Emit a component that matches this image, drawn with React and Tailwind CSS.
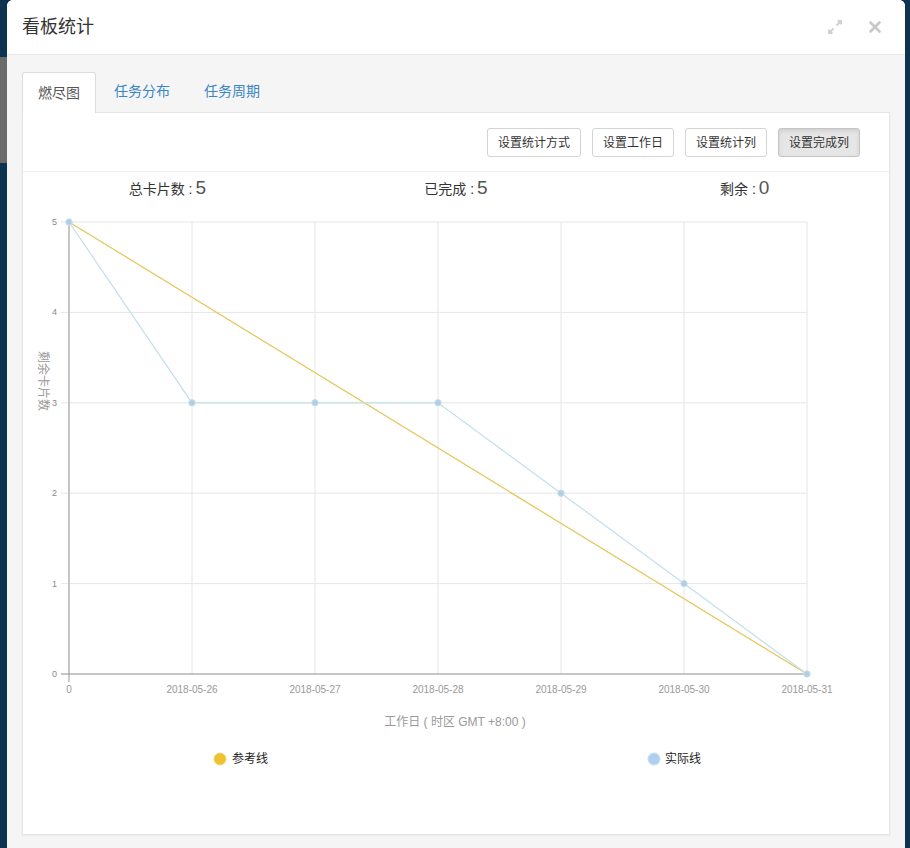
const font = { fontFamily: '"Liberation Sans", "Noto Sans CJK SC", sans-serif' };

const xs = [68, 191, 314, 437, 560, 683, 806];
const dates = ["0", "2018-05-26", "2018-05-27", "2018-05-28", "2018-05-29", "2018-05-30", "2018-05-31"];
const yOf = (v) => 675 - v * 90.4;
const actual = [5, 3, 3, 3, 2, 1, 0];

// chart svg is placed at page x=22, y=206
const OX = 22;
const OY = 206;

const BurnChart = () => {
    const pts = actual.map((v, i) => [xs[i] - OX, yOf(v) - OY]);
    return (
        <svg width="868" height="628" viewBox="0 0 868 628" className="block">
            {xs.map((x) => (
                <line key={"vx" + x} x1={x - OX} x2={x - OX} y1={223 - OY} y2={675 - OY} stroke="#e6e6e6" />
            ))}
            {[0, 1, 2, 3, 4, 5].map((v) => (
                <line key={"hy" + v} x1={60 - OX} x2={806 - OX} y1={yOf(v) - OY} y2={yOf(v) - OY} stroke="#e6e6e6" />
            ))}
            {[0, 1, 2, 3, 4, 5].map((v) => (
                <text key={"ty" + v} x={56 - OX} y={yOf(v) - OY + 3} fontSize="9" fill="#888" textAnchor="end" style={font}>
                    {v}
                </text>
            ))}
            <line x1={68 - OX} x2={68 - OX} y1={223 - OY} y2={683 - OY} stroke="#999" />
            <line x1={60 - OX} x2={806 - OX} y1={675 - OY} y2={675 - OY} stroke="#999" />
            {xs.map((x, i) => (
                <text key={"tx" + i} x={x - OX} y={694 - OY} fontSize="10" fill="#999" textAnchor="middle" style={font}>
                    {dates[i]}
                </text>
            ))}
            <line x1={68 - OX} y1={223 - OY} x2={806 - OX} y2={675 - OY} stroke="#e6c85e" strokeWidth="1.3" />
            <polyline points={pts.map((p) => p.join(",")).join(" ")} fill="none" stroke="#c2dfea" strokeWidth="1.2" />
            {pts.map((p, i) => (
                <circle key={"c" + i} cx={p[0]} cy={p[1]} r="3.2" fill="#b0cfe4" stroke="#cadfec" strokeWidth="1" />
            ))}
            <text x={454 - OX} y={727 - OY} fontSize="12" fill="#999" textAnchor="middle" style={font}>
                工作日 ( 时区 GMT +8:00 )
            </text>
            <text
                x={0}
                y={0}
                fontSize="12"
                fill="#999"
                textAnchor="middle"
                transform={`translate(${38 - OX} ${382 - OY}) rotate(90)`}
                style={font}
            >
                剩余卡片数
            </text>
            <circle cx={219 - OX} cy={760 - OY} r="6" fill="#efc12f" stroke="#f3d778" strokeWidth="1" />
            <text x={231 - OX} y={764 - OY} fontSize="12" fill="#222" style={font}>
                参考线
            </text>
            <circle cx={653 - OX} cy={760 - OY} r="6" fill="#aed0ee" stroke="#c5def3" strokeWidth="1" />
            <text x={664 - OX} y={764 - OY} fontSize="12" fill="#222" style={font}>
                实际线
            </text>
        </svg>
    );
};

const Stat = ({ label, value }) => (
    <div className="flex-1 flex justify-center items-baseline">
        <span className="text-[14px] text-[#333]">{label} : </span>
        <span className="text-[19px] text-[#555] leading-none ml-[3px]">{value}</span>
    </div>
);

const Btn = ({ children, active }) => (
    <button
        className={
            "h-[29px] px-[10px] text-[12px] text-[#333] border rounded-[3px] " +
            (active
                ? "bg-[#e6e6e6] border-[#c4c4c4] shadow-[inset_0_2px_4px_rgba(0,0,0,0.1)]"
                : "bg-white border-[#d4d4d4]")
        }
    >
        {children}
    </button>
);

const App = () => {
    return (
        <div className="w-[910px] h-[848px] flex bg-[#0d3350] overflow-hidden" style={font}>
            <div className="w-[7px] flex flex-col">
                <div className="h-[57px]" />
                <div className="h-[106px] bg-[#6a6a6a]" />
            </div>
            <div className="w-[898px] flex flex-col bg-[#f5f5f5] rounded-tl-[6px] rounded-tr-[6px]">
                <div className="h-[55px] bg-white border-b border-[#e8e8e8] rounded-t-[6px] flex items-center justify-between pl-[15px] pr-[23px]">
                    <span className="text-[18px] text-[#333]">看板统计</span>
                    <div className="flex items-center gap-[25px]">
                        <svg width="16" height="16" viewBox="0 0 16 16" fill="none" stroke="#cfcfcf" strokeWidth="1.8">
                            <path d="M9.5 6.5 L14 2 M10.5 2 H14 V5.5" />
                            <path d="M6.5 9.5 L2 14 M2 10.5 V14 H5.5" />
                        </svg>
                        <svg width="14" height="14" viewBox="0 0 14 14" stroke="#c8c8c8" strokeWidth="2.6" strokeLinecap="round">
                            <path d="M2.5 2.5 L11.5 11.5 M11.5 2.5 L2.5 11.5" />
                        </svg>
                    </div>
                </div>
                <div className="flex-1 px-[15px] pt-[16px] flex flex-col">
                    <div className="flex h-[41px] items-stretch">
                        <div className="w-[74px] bg-white border border-b-0 border-[#dcdcdc] rounded-t-[3px] flex items-center justify-center text-[14px] text-[#555] relative top-[1px]">
                            燃尽图
                        </div>
                        <div className="flex items-center pl-[18px] text-[14px] text-[#3b86c4]">任务分布</div>
                        <div className="flex items-center pl-[34px] text-[14px] text-[#3b86c4]">任务周期</div>
                    </div>
                    <div className="h-[723px] bg-white border border-[#e6e6e6] shadow-[0_1px_2px_rgba(0,0,0,0.05)] flex flex-col">
                        <div className="flex justify-end gap-[11px] pt-[15px] pr-[29px] pb-[14px] border-b border-[#f0f0f0]">
                            <Btn>设置统计方式</Btn>
                            <Btn>设置工作日</Btn>
                            <Btn>设置统计列</Btn>
                            <Btn active>设置完成列</Btn>
                        </div>
                        <div className="flex pt-[6px] h-[33px]">
                            <Stat label="总卡片数" value="5" />
                            <Stat label="已完成" value="5" />
                            <Stat label="剩余" value="0" />
                        </div>
                        <BurnChart />
                    </div>
                </div>
            </div>
            <div className="w-[5px]" />
        </div>
    );
};

export default App;
